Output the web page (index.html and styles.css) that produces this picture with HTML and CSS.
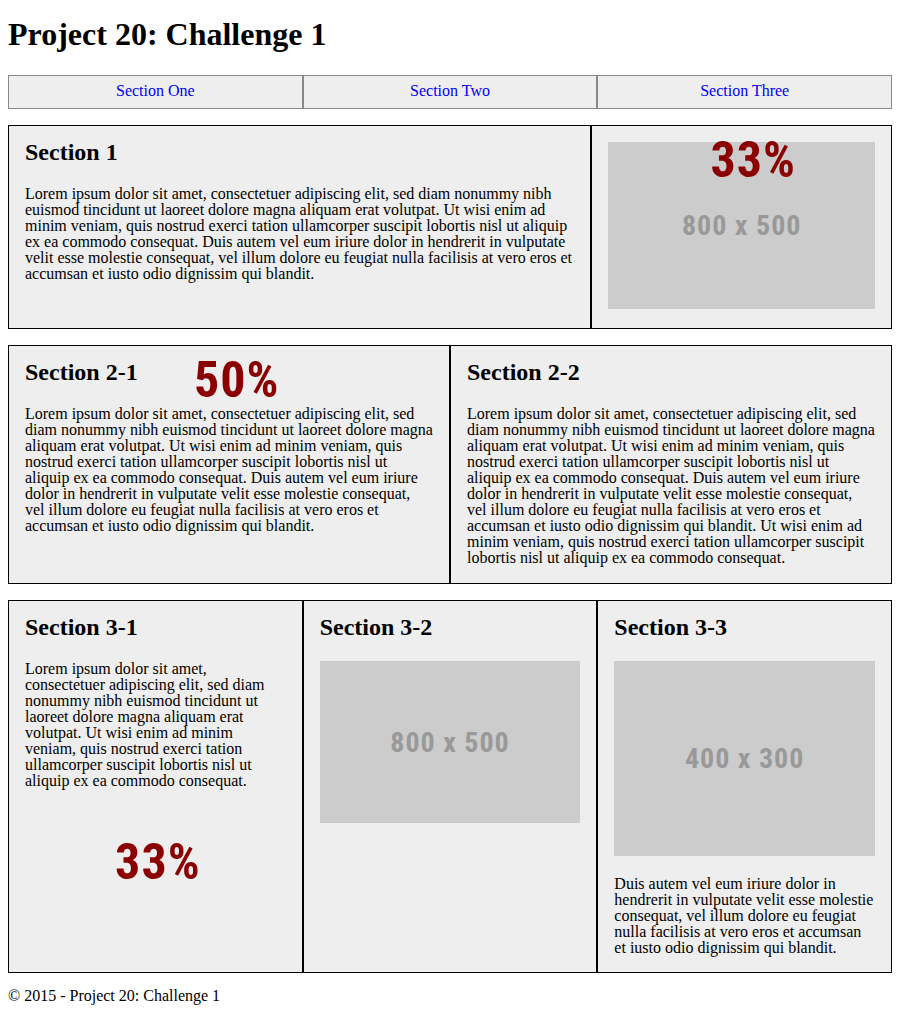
FILE: index.html
```html
<!DOCTYPE html>
<html lang="en">
<head>
<meta charset="utf-8">
<title>Project 20: Challenge 1</title>
<link rel="stylesheet" href="styles.css">
</head>
<body>
<div class="page">
  <h1 class="title">Project 20: Challenge 1</h1>
  <nav class="nav">
    <a href="#s1">Section One</a>
    <a href="#s2">Section Two</a>
    <a href="#s3">Section Three</a>
  </nav>
  <div class="rows">
    <div class="row" id="s1">
      <section class="cell w66">
        <h2>Section 1</h2>
        <p>Lorem ipsum dolor sit amet, consectetuer adipiscing elit, sed diam nonummy nibh euismod tincidunt ut laoreet dolore magna aliquam erat volutpat. Ut wisi enim ad minim veniam, quis nostrud exerci tation ullamcorper suscipit lobortis nisl ut aliquip ex ea commodo consequat. Duis autem vel eum iriure dolor in hendrerit in vulputate velit esse molestie consequat, vel illum dolore eu feugiat nulla facilisis at vero eros et accumsan et iusto odio dignissim qui blandit.</p>
      </section>
      <section class="cell w34">
        <div class="ph wide">800 x 500</div>
        <span class="pct pct-s1">33%</span>
      </section>
    </div>
    <div class="row" id="s2">
      <section class="cell w50">
        <h2>Section 2-1</h2>
        <p>Lorem ipsum dolor sit amet, consectetuer adipiscing elit, sed diam nonummy nibh euismod tincidunt ut laoreet dolore magna aliquam erat volutpat. Ut wisi enim ad minim veniam, quis nostrud exerci tation ullamcorper suscipit lobortis nisl ut aliquip ex ea commodo consequat. Duis autem vel eum iriure dolor in hendrerit in vulputate velit esse molestie consequat, vel illum dolore eu feugiat nulla facilisis at vero eros et accumsan et iusto odio dignissim qui blandit.</p>
        <span class="pct pct-s21">50%</span>
      </section>
      <section class="cell w50">
        <h2>Section 2-2</h2>
        <p>Lorem ipsum dolor sit amet, consectetuer adipiscing elit, sed diam nonummy nibh euismod tincidunt ut laoreet dolore magna aliquam erat volutpat. Ut wisi enim ad minim veniam, quis nostrud exerci tation ullamcorper suscipit lobortis nisl ut aliquip ex ea commodo consequat. Duis autem vel eum iriure dolor in hendrerit in vulputate velit esse molestie consequat, vel illum dolore eu feugiat nulla facilisis at vero eros et accumsan et iusto odio dignissim qui blandit. Ut wisi enim ad minim veniam, quis nostrud exerci tation ullamcorper suscipit lobortis nisl ut aliquip ex ea commodo consequat.</p>
      </section>
    </div>
    <div class="row" id="s3">
      <section class="cell w33">
        <h2>Section 3-1</h2>
        <p>Lorem ipsum dolor sit amet, consectetuer adipiscing elit, sed diam nonummy nibh euismod tincidunt ut laoreet dolore magna aliquam erat volutpat. Ut wisi enim ad minim veniam, quis nostrud exerci tation ullamcorper suscipit lobortis nisl ut aliquip ex ea commodo consequat.</p>
        <div class="pct pct-flow">33%</div>
      </section>
      <section class="cell w33">
        <h2>Section 3-2</h2>
        <div class="ph wide after-h">800 x 500</div>
      </section>
      <section class="cell w33">
        <h2>Section 3-3</h2>
        <div class="ph tall after-h">400 x 300</div>
        <p class="after-ph">Duis autem vel eum iriure dolor in hendrerit in vulputate velit esse molestie consequat, vel illum dolore eu feugiat nulla facilisis at vero eros et accumsan et iusto odio dignissim qui blandit.</p>
      </section>
    </div>
  </div>
  <footer class="foot">© 2015 - Project 20: Challenge 1</footer>
</div>
</body>
</html>
```

FILE: styles.css
```css
html, body {
  margin: 0;
  padding: 0;
  background: #fff;
}

body {
  font-family: "Liberation Serif", "Times New Roman", serif;
  font-size: 16px;
  color: #000;
}

.page {
  padding: 8px;
  width: 884px;
}

.title {
  font-size: 32px;
  font-weight: bold;
  margin: 8px 0 22px;
  line-height: normal;
}

.nav {
  display: flex;
  margin-bottom: 16px;
}

.nav a {
  flex: 1 1 0;
  border: 1px solid #888;
  background: #eee;
  text-align: center;
  color: #00e;
  text-decoration: none;
  padding: 6px 0 8px;
  line-height: 18px;
}

.rows {
  display: flex;
  flex-direction: column;
  gap: 16px;
}

.row {
  display: flex;
  align-items: stretch;
}

.cell {
  position: relative;
  box-sizing: border-box;
  border: 1px solid #000;
  background: #eee;
  padding: 16px;
}

.w66 { width: 66%; }
.w34 { width: 34%; }
.w50 { width: 50%; }
.w33 { flex: 1 1 0; min-width: 0; }

.cell h2 {
  margin: 0 0 24px;
  font-size: 24px;
  font-weight: bold;
  line-height: 20px;
}

.cell p {
  margin: 0;
  line-height: 16px;
}

#s2 .cell {
  padding-bottom: 17px;
}

.cell p.after-ph {
  margin-top: 20px;
}

.ph {
  background: #ccc;
  color: #999;
  display: flex;
  align-items: center;
  justify-content: center;
  font-family: "Liberation Sans Narrow", "Roboto Condensed", "DejaVu Sans Condensed", "Liberation Sans", sans-serif;
  font-weight: bold;
  font-size: 28px;
  letter-spacing: 1px;
  margin-bottom: 3px;
}

.ph.wide { aspect-ratio: 800 / 500; }
.ph.tall { aspect-ratio: 400 / 300; }

.pct {
  font-family: "Liberation Sans Narrow", "Roboto Condensed", "DejaVu Sans Condensed", "Liberation Sans", sans-serif;
  font-weight: bold;
  font-size: 50px;
  letter-spacing: 1px;
  color: #8b0000;
  line-height: normal;
}

.pct-s1 {
  position: absolute;
  top: 5px;
  left: 118px;
}

.pct-s21 {
  position: absolute;
  top: 5px;
  left: 185px;
}

.pct-flow {
  margin-top: 44px;
  text-align: center;
  padding-left: 5px;
}

.foot {
  margin-top: 14px;
  line-height: normal;
}
```
